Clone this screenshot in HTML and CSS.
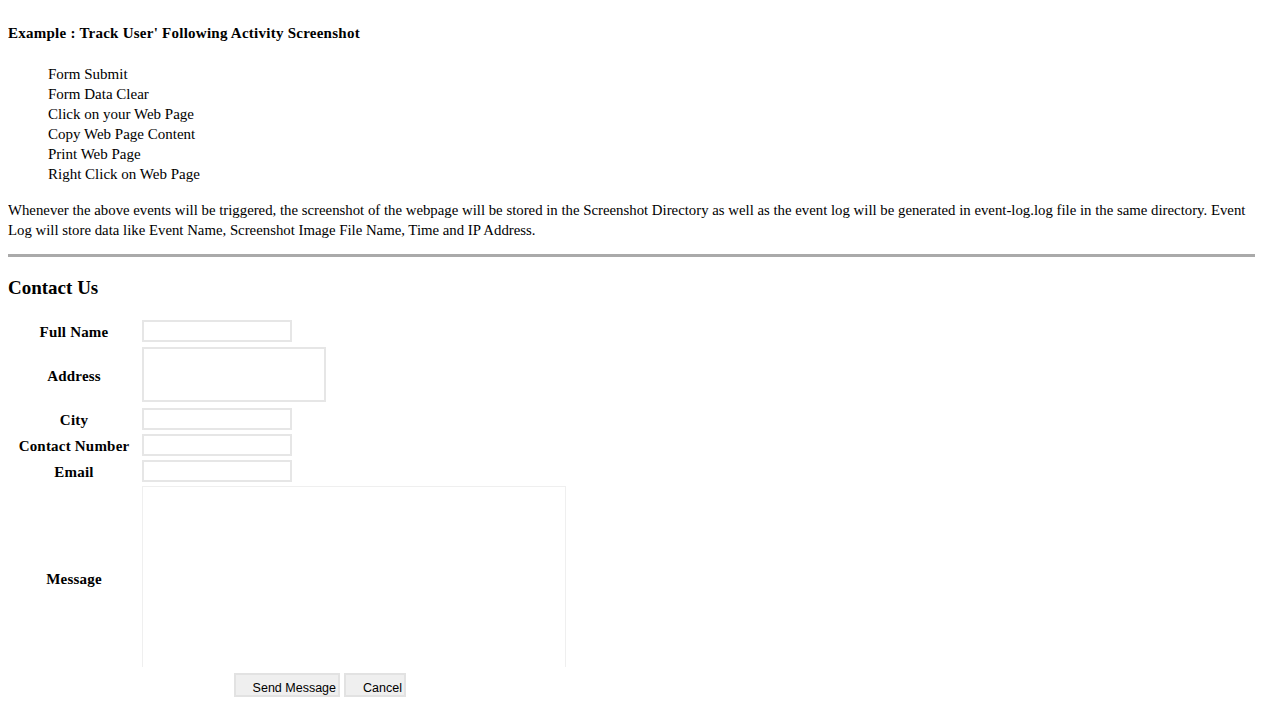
FILE: index.html
```html
<!DOCTYPE html>
<html>
<head>
<meta charset="utf-8">
<title>Track User Activity</title>
<link rel="stylesheet" href="styles.css">
</head>
<body>
<div class="title">Example : Track User' Following Activity Screenshot</div>
<ul class="events">
  <li>Form Submit</li>
  <li>Form Data Clear</li>
  <li>Click on your Web Page</li>
  <li>Copy Web Page Content</li>
  <li>Print Web Page</li>
  <li>Right Click on Web Page</li>
</ul>
<p class="desc">Whenever the above events will be triggered, the screenshot of the webpage will be stored in the Screenshot Directory as well as the event log will be generated in event-log.log file in the same directory. Event Log will store data like Event Name, Screenshot Image File Name, Time and IP Address.</p>
<hr class="sep">
<h3 class="contact-title">Contact Us</h3>
<form>
<table class="contact">
  <tr class="row">
    <td class="label">Full Name</td>
    <td class="field"><input type="text" class="text"></td>
  </tr>
  <tr class="row">
    <td class="label">Address</td>
    <td class="field"><textarea class="address"></textarea></td>
  </tr>
  <tr class="row">
    <td class="label">City</td>
    <td class="field"><input type="text" class="text"></td>
  </tr>
  <tr class="row">
    <td class="label">Contact Number</td>
    <td class="field"><input type="text" class="text"></td>
  </tr>
  <tr class="row">
    <td class="label">Email</td>
    <td class="field"><input type="text" class="text"></td>
  </tr>
  <tr class="row msg-row">
    <td class="label">Message</td>
    <td class="field"><div class="msg-wrap"><textarea class="message"></textarea></div></td>
  </tr>
  <tr class="row">
    <td class="label"></td>
    <td class="field actions"><button type="submit" class="btn send">Send Message</button><button type="reset" class="btn cancel">Cancel</button></td>
  </tr>
</table>
</form>
</body>
</html>
```
FILE: styles.css
```css
html, body {
  background: #fff;
}
body {
  margin: 8px;
  font-family: "Liberation Serif", "Times New Roman", serif;
  font-size: 15px;
  color: #000;
}
.title {
  margin-top: 15px;
  font-weight: bold;
  letter-spacing: 0.25px;
  line-height: 20px;
}
.events {
  list-style: none;
  margin: 21px 0 0 0;
  padding: 0 0 0 40px;
}
.events li {
  line-height: 20px;
}
.desc {
  margin: 16px 0 0 0;
  font-size: 14.8px;
  line-height: 20px;
}
.sep {
  margin: 14px 0 0 0;
  border: none;
  height: 3px;
  background: #aaaaaa;
}
.contact-title {
  margin: 20px 0 0 0;
  font-size: 19px;
  line-height: 22px;
  font-weight: bold;
}
.contact {
  margin-top: 19px;
  border-collapse: collapse;
  border-spacing: 0;
}
.contact td {
  padding: 0;
}
.label {
  width: 132px;
  padding-top: 2px !important;
  text-align: center;
  vertical-align: middle;
  font-weight: bold;
  letter-spacing: 0.2px;
  white-space: nowrap;
}
.field {
  padding: 2px 0 2px 2px !important;
  vertical-align: top;
}
.text {
  display: block;
  box-sizing: border-box;
  width: 150px;
  height: 22px;
  margin: 0;
  padding: 0 2px;
  border: 2px solid #e6e6e6;
  background: #fff;
  font: 13px "Liberation Sans", Arial, sans-serif;
}
.address {
  display: block;
  box-sizing: border-box;
  width: 184px;
  height: 55px;
  margin: 1px 0 2px 0;
  padding: 2px;
  border: 2px solid #e6e6e6;
  resize: none;
}
.msg-row .field {
  height: 185px;
}
.msg-wrap {
  height: 181px;
  overflow: hidden;
  width: 425px;
}
.message {
  display: block;
  box-sizing: border-box;
  width: 424px;
  height: 200px;
  margin: 0;
  border: 1px solid #efefef;
  resize: none;
}
.actions {
  padding-top: 0 !important;
  white-space: nowrap;
}
.btn {
  box-sizing: border-box;
  height: 24px;
  margin: 0;
  padding: 7px 2px 0 0;
  border: 2px solid #e2e2e2;
  background: #efefef;
  color: #000;
  font: 12.5px "Liberation Sans", Arial, sans-serif;
  line-height: 13px;
  text-align: right;
  white-space: nowrap;
  vertical-align: top;
}
.send {
  width: 106px;
  margin-left: 92px;
}
.cancel {
  width: 62px;
  margin-left: 4px;
}
```
